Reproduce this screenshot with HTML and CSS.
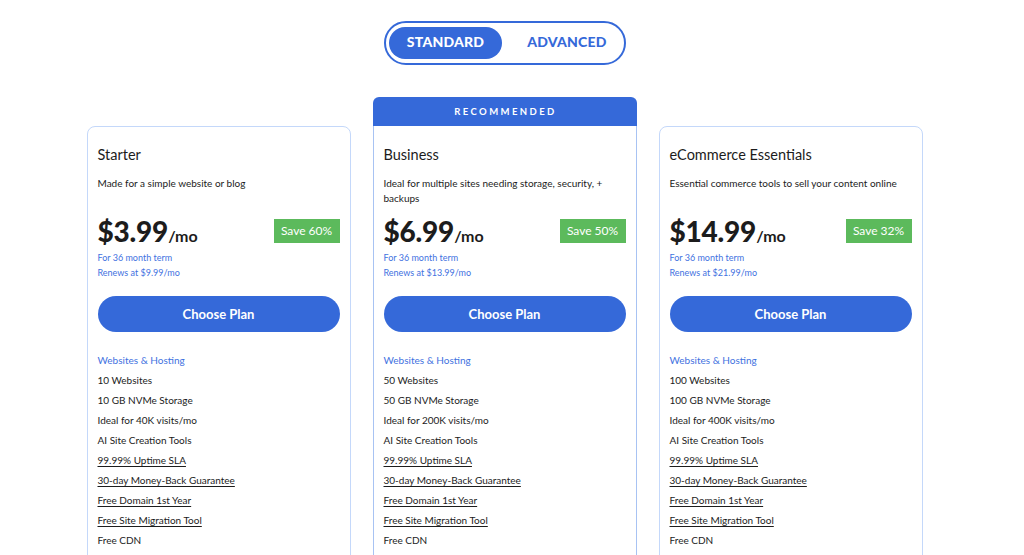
FILE: index.html
```html
<!DOCTYPE html>
<html lang="en">
<head>
<meta charset="utf-8">
<title>Plans</title>
<link rel="stylesheet" href="styles.css">
</head>
<body>
<div class="page">
  <div class="toggle">
    <button class="tab active">STANDARD</button>
    <button class="tab">ADVANCED</button>
  </div>

  <div class="plans">
    <div class="plan">
      <div class="card">
        <h3 class="name">Starter</h3>
        <p class="desc">Made for a simple website or blog</p>
        <div class="price-row">
          <div class="price"><span class="amount">$3.99</span><span class="per">/mo</span></div>
          <span class="save">Save 60%</span>
        </div>
        <div class="terms">
          <div>For 36 month term</div>
          <div>Renews at $9.99/mo</div>
        </div>
        <button class="choose">Choose Plan</button>
        <div class="section">Websites &amp; Hosting</div>
        <ul class="features">
          <li>10 Websites</li>
          <li>10 GB NVMe Storage</li>
          <li>Ideal for 40K visits/mo</li>
          <li>AI Site Creation Tools</li>
          <li><span class="u">99.99% Uptime SLA</span></li>
          <li><span class="u">30-day Money-Back Guarantee</span></li>
          <li><span class="u">Free Domain 1st Year</span></li>
          <li><span class="u">Free Site Migration Tool</span></li>
          <li>Free CDN</li>
        </ul>
      </div>
    </div>

    <div class="plan featured">
      <div class="ribbon">RECOMMENDED</div>
      <div class="card">
        <h3 class="name">Business</h3>
        <p class="desc">Ideal for multiple sites needing storage, security, + backups</p>
        <div class="price-row">
          <div class="price"><span class="amount">$6.99</span><span class="per">/mo</span></div>
          <span class="save">Save 50%</span>
        </div>
        <div class="terms">
          <div>For 36 month term</div>
          <div>Renews at $13.99/mo</div>
        </div>
        <button class="choose">Choose Plan</button>
        <div class="section">Websites &amp; Hosting</div>
        <ul class="features">
          <li>50 Websites</li>
          <li>50 GB NVMe Storage</li>
          <li>Ideal for 200K visits/mo</li>
          <li>AI Site Creation Tools</li>
          <li><span class="u">99.99% Uptime SLA</span></li>
          <li><span class="u">30-day Money-Back Guarantee</span></li>
          <li><span class="u">Free Domain 1st Year</span></li>
          <li><span class="u">Free Site Migration Tool</span></li>
          <li>Free CDN</li>
        </ul>
      </div>
    </div>

    <div class="plan">
      <div class="card">
        <h3 class="name">eCommerce Essentials</h3>
        <p class="desc">Essential commerce tools to sell your content online</p>
        <div class="price-row">
          <div class="price"><span class="amount">$14.99</span><span class="per">/mo</span></div>
          <span class="save">Save 32%</span>
        </div>
        <div class="terms">
          <div>For 36 month term</div>
          <div>Renews at $21.99/mo</div>
        </div>
        <button class="choose">Choose Plan</button>
        <div class="section">Websites &amp; Hosting</div>
        <ul class="features">
          <li>100 Websites</li>
          <li>100 GB NVMe Storage</li>
          <li>Ideal for 400K visits/mo</li>
          <li>AI Site Creation Tools</li>
          <li><span class="u">99.99% Uptime SLA</span></li>
          <li><span class="u">30-day Money-Back Guarantee</span></li>
          <li><span class="u">Free Domain 1st Year</span></li>
          <li><span class="u">Free Site Migration Tool</span></li>
          <li>Free CDN</li>
        </ul>
      </div>
    </div>
  </div>
</div>
</body>
</html>
```

FILE: styles.css
```css
* { box-sizing: border-box; }

html, body {
  margin: 0;
  padding: 0;
  background: #ffffff;
  font-family: "Lato", "Liberation Sans", sans-serif;
  color: #1c1c1c;
}

body { overflow: hidden; }

.page {
  display: flex;
  flex-direction: column;
  align-items: center;
  padding: 21px 15px 0 0;
}

.toggle {
  display: flex;
  align-items: center;
  width: 242px;
  height: 44px;
  border: 2px solid #3569d9;
  border-radius: 22px;
  padding: 3px;
  margin-left: 1px;
}

.tab {
  border: 0;
  background: transparent;
  font-family: inherit;
  font-weight: 900;
  font-size: 14px;
  letter-spacing: 0.2px;
  color: #3569d9;
  height: 32px;
  border-radius: 16px;
  padding: 0 0 3px 0;
  cursor: pointer;
}

.tab.active {
  width: 113px;
  background: #3569d9;
  color: #ffffff;
}

.tab:not(.active) {
  flex: 1;
  padding-left: 11px;
}

.plans {
  display: flex;
  gap: 22px;
  margin-top: 32px;
  align-items: flex-start;
}

.plan {
  width: 264px;
  display: flex;
  flex-direction: column;
  padding-top: 29px;
}

.plan.featured { padding-top: 0; }

.ribbon {
  height: 29px;
  background: #3569d9;
  color: #ffffff;
  border-radius: 6px 6px 0 0;
  font-size: 9.5px;
  font-weight: 700;
  letter-spacing: 2.4px;
  display: flex;
  align-items: center;
  justify-content: center;
  padding-left: 2px;
}

.card {
  border: 1px solid #c4d8fa;
  border-radius: 8px;
  padding: 19px 10px 0 10px;
  min-height: 440px;
}

.featured .card {
  border-color: #a8c3f3;
  border-top: 0;
  border-radius: 0 0 8px 8px;
  padding-top: 20px;
}

.name {
  margin: 0;
  font-size: 14.5px;
  font-weight: 400;
  line-height: 18px;
}

.desc {
  margin: 12px 0 0 0;
  font-size: 10px;
  line-height: 14.5px;
  min-height: 29px;
}

.price-row {
  display: flex;
  justify-content: space-between;
  align-items: center;
  margin-top: 12px;
  height: 28px;
}

.price {
  display: flex;
  align-items: baseline;
}

.amount {
  font-size: 28px;
  font-weight: 900;
  letter-spacing: -0.2px;
}

.per {
  font-size: 16px;
  font-weight: 700;
}

.save {
  background: #5cba5c;
  color: #ffffff;
  font-size: 12px;
  height: 24px;
  line-height: 24px;
  padding: 0 7px;
  min-width: 66px;
  text-align: center;
}

.terms {
  margin-top: 5px;
  font-size: 9px;
  line-height: 15px;
  color: #3f72df;
}

.choose {
  display: block;
  width: 100%;
  height: 36px;
  margin-top: 16px;
  border: 0;
  border-radius: 18px;
  background: #3569d9;
  color: #ffffff;
  font-family: inherit;
  font-size: 13px;
  font-weight: 700;
  cursor: pointer;
}

.section {
  margin-top: 18px;
  font-size: 10px;
  line-height: 20px;
  color: #3f72df;
}

.features {
  list-style: none;
  margin: 0;
  padding: 0;
  font-size: 10px;
  line-height: 20px;
}

.u {
  text-decoration: underline;
  text-underline-offset: 2px;
}
```
